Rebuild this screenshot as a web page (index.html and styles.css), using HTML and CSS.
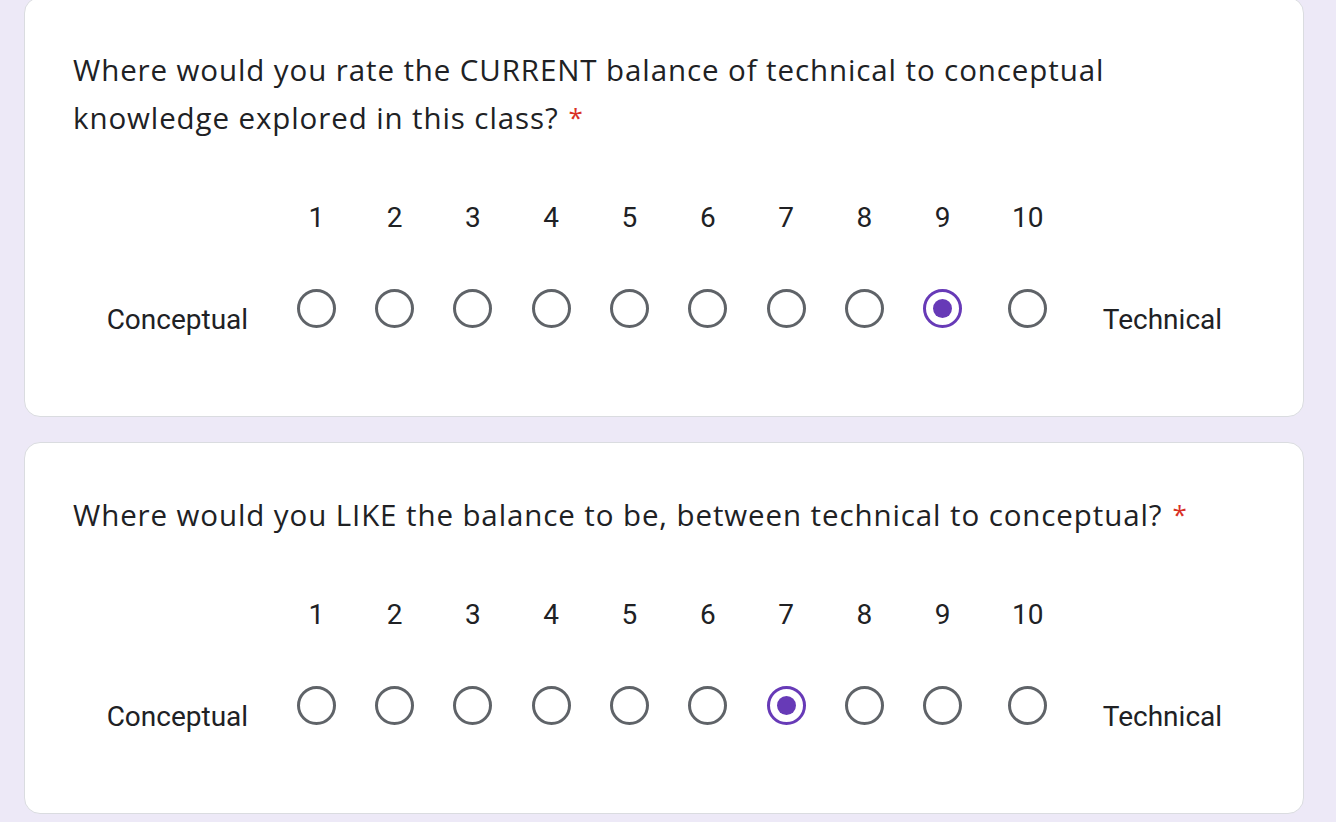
FILE: index.html
```html
<!DOCTYPE html>
<html>
<head>
<meta charset="utf-8">
<link rel="stylesheet" href="styles.css">
</head>
<body>
<div class="page">
  <div class="card">
    <div class="title">Where would you rate the CURRENT balance of technical to conceptual knowledge explored in this class?<span class="req">*</span></div>
    <div class="scale">
      <div class="spacer"></div>
      <div class="num">1</div><div class="num">2</div><div class="num">3</div><div class="num">4</div><div class="num">5</div><div class="num">6</div><div class="num">7</div><div class="num">8</div><div class="num">9</div><div class="num">10</div>
      <div class="spacer"></div>
      <div class="lbl lbl-left">Conceptual</div>
      <div class="cell"><span class="radio"></span></div>
      <div class="cell"><span class="radio"></span></div>
      <div class="cell"><span class="radio"></span></div>
      <div class="cell"><span class="radio"></span></div>
      <div class="cell"><span class="radio"></span></div>
      <div class="cell"><span class="radio"></span></div>
      <div class="cell"><span class="radio"></span></div>
      <div class="cell"><span class="radio"></span></div>
      <div class="cell"><span class="radio checked"></span></div>
      <div class="cell"><span class="radio"></span></div>
      <div class="lbl lbl-right">Technical</div>
    </div>
  </div>
  <div class="card">
    <div class="title">Where would you LIKE the balance to be, between technical to conceptual?<span class="req">*</span></div>
    <div class="scale">
      <div class="spacer"></div>
      <div class="num">1</div><div class="num">2</div><div class="num">3</div><div class="num">4</div><div class="num">5</div><div class="num">6</div><div class="num">7</div><div class="num">8</div><div class="num">9</div><div class="num">10</div>
      <div class="spacer"></div>
      <div class="lbl lbl-left">Conceptual</div>
      <div class="cell"><span class="radio"></span></div>
      <div class="cell"><span class="radio"></span></div>
      <div class="cell"><span class="radio"></span></div>
      <div class="cell"><span class="radio"></span></div>
      <div class="cell"><span class="radio"></span></div>
      <div class="cell"><span class="radio"></span></div>
      <div class="cell"><span class="radio checked"></span></div>
      <div class="cell"><span class="radio"></span></div>
      <div class="cell"><span class="radio"></span></div>
      <div class="cell"><span class="radio"></span></div>
      <div class="lbl lbl-right">Technical</div>
    </div>
  </div>
</div>
</body>
</html>
```

FILE: styles.css
```css
html, body {
  margin: 0;
  padding: 0;
  background: #ede9f7;
  height: 100%;
  overflow: hidden;
}
.page {
  margin-top: -3px;
  padding-left: 24px;
  width: 1280px;
  display: flex;
  flex-direction: column;
  gap: 25px;
}
.card {
  background: #fff;
  border: 1px solid #dadce0;
  border-radius: 16px;
  padding: 48px 48px 88px 48px;
}
.title {
  font-family: "Open Sans", sans-serif;
  font-size: 29.5px;
  line-height: 48px;
  color: #202124;
  letter-spacing: 0.9px;
  max-width: 1120px;
}
.req {
  color: #d93025;
  margin-left: 10px;
  font-size: 26px;
  line-height: 20px;
  vertical-align: 2px;
}
.scale {
  display: grid;
  grid-template-columns: 173px repeat(9, 78.3px) 92px 150px;
  grid-template-rows: 48px 40px;
  row-gap: 47px;
  justify-content: center;
  margin-top: 51px;
  font-family: Roboto, sans-serif;
  font-size: 28px;
  color: #202124;
}
.num {
  display: flex;
  align-items: center;
  justify-content: center;
}
.lbl {
  line-height: 30px;
  margin-top: 17px;
}
.lbl-left {
  text-align: right;
  padding-right: 29px;
}
.lbl-right {
  padding-left: 29px;
}
.cell {
  display: flex;
  align-items: center;
  justify-content: center;
}
.radio {
  box-sizing: border-box;
  width: 39px;
  height: 39px;
  border: 3.5px solid #5f6368;
  border-radius: 50%;
  display: flex;
  align-items: center;
  justify-content: center;
}
.radio.checked {
  border-color: #673ab7;
}
.radio.checked::after {
  content: "";
  width: 19px;
  height: 19px;
  border-radius: 50%;
  background: #673ab7;
}
```
